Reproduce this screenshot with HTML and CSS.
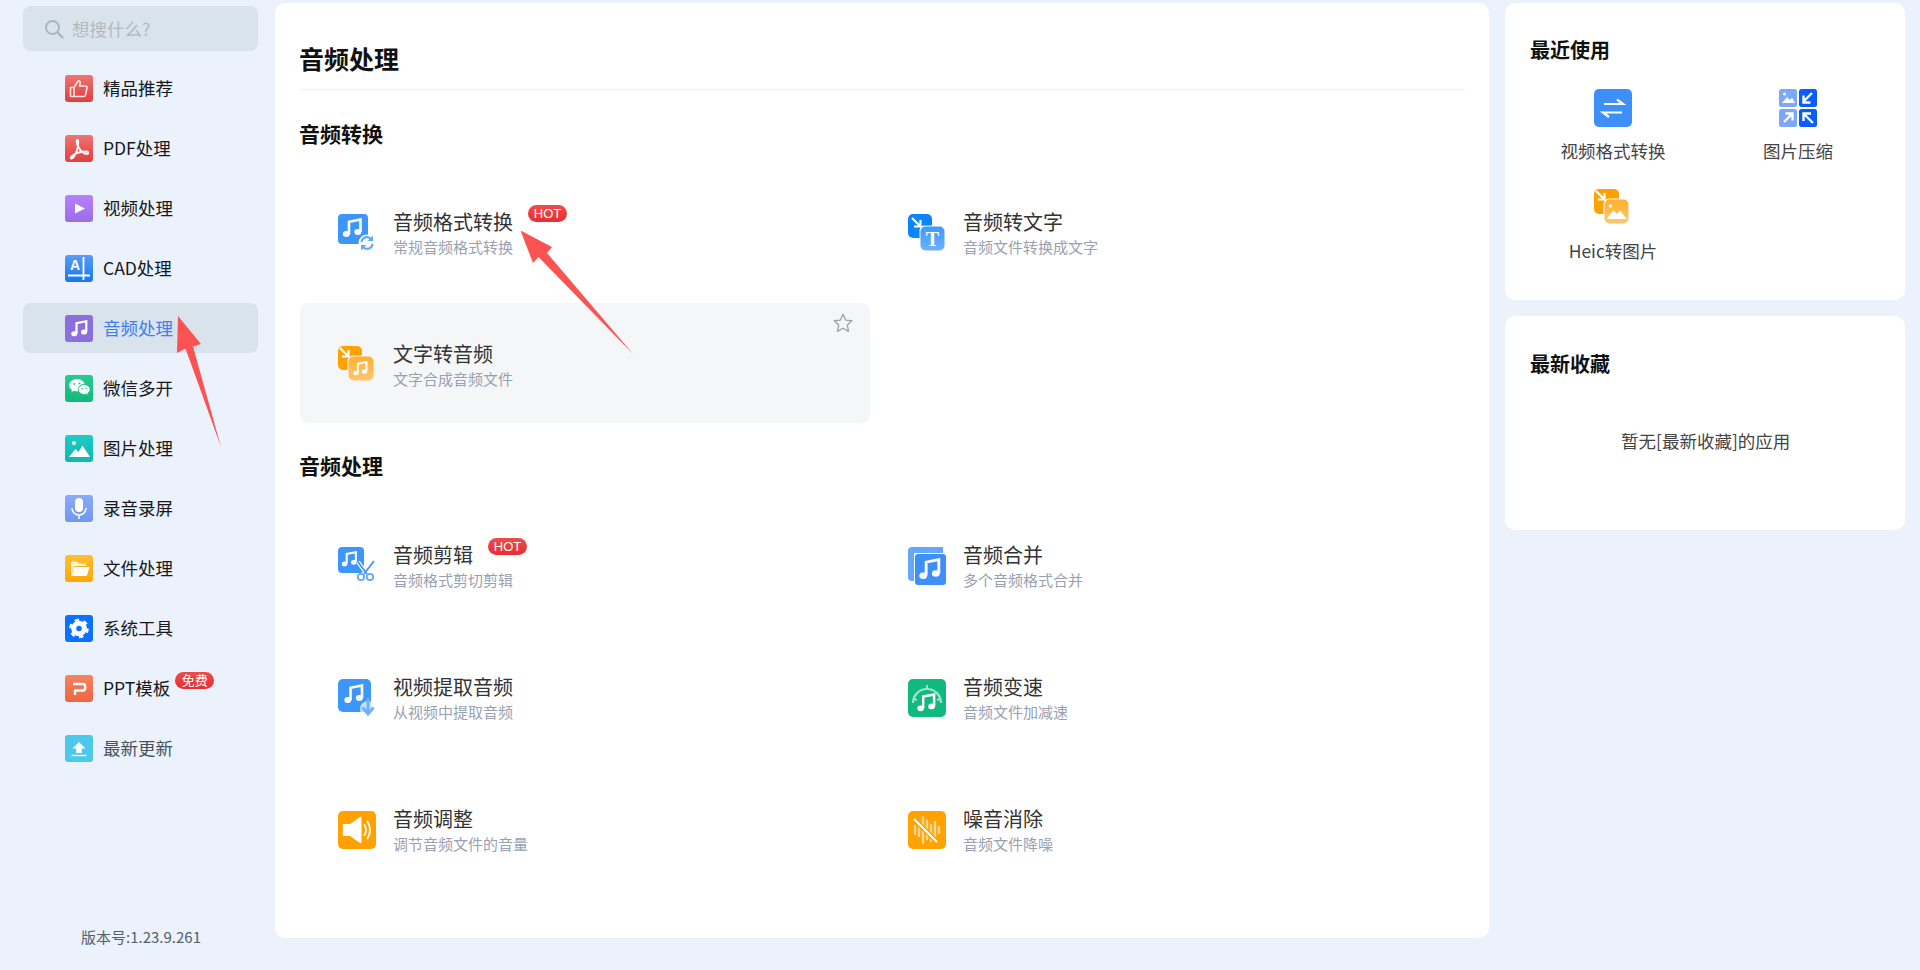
FILE: index.html
```html
<!DOCTYPE html>
<html lang="zh-CN">
<head>
<meta charset="utf-8">
<title>音频处理</title>
<link rel="stylesheet" href="styles.css">
</head>
<body>
<svg class="defs" width="0" height="0" aria-hidden="true">
  <defs>
    <symbol id="note" viewBox="2 2.500 20 20">
      <path d="M8.500 18.500V6.200L20 4v12.500" fill="none" stroke="currentColor" stroke-width="2.600"/>
      <ellipse cx="5.800" cy="18.600" rx="3.500" ry="3" fill="currentColor"/>
      <ellipse cx="17.300" cy="16.600" rx="3.500" ry="3" fill="currentColor"/>
    </symbol>
    <linearGradient id="gRed" x1="0" y1="0" x2="0" y2="1"><stop offset="0" stop-color="#ee7472"/><stop offset="1" stop-color="#e23f3d"/></linearGradient>
    <linearGradient id="gPur" x1="0" y1="0" x2="0" y2="1"><stop offset="0" stop-color="#b880fb"/><stop offset="1" stop-color="#9a6ce6"/></linearGradient>
    <linearGradient id="gCad" x1="0" y1="0" x2="0" y2="1"><stop offset="0" stop-color="#5a9cf2"/><stop offset="1" stop-color="#1479f0"/></linearGradient>
    <linearGradient id="gGrn" x1="0" y1="0" x2="0" y2="1"><stop offset="0" stop-color="#27cb90"/><stop offset="1" stop-color="#12b97b"/></linearGradient>
    <linearGradient id="gTeal" x1="0" y1="0" x2="0" y2="1"><stop offset="0" stop-color="#1ecbc8"/><stop offset="1" stop-color="#10b8ad"/></linearGradient>
    <linearGradient id="gMic" x1="0" y1="0" x2="0" y2="1"><stop offset="0" stop-color="#8aaafa"/><stop offset="1" stop-color="#7197ef"/></linearGradient>
    <linearGradient id="gYel" x1="0" y1="0" x2="0" y2="1"><stop offset="0" stop-color="#ffbe33"/><stop offset="1" stop-color="#ffa800"/></linearGradient>
    <linearGradient id="gPpt" x1="0" y1="0" x2="0" y2="1"><stop offset="0" stop-color="#f5845f"/><stop offset="1" stop-color="#ed6540"/></linearGradient>
    <linearGradient id="gLightO" x1="0" y1="0" x2="0" y2="1"><stop offset="0" stop-color="#ffb02e"/><stop offset="1" stop-color="#ffc76e"/></linearGradient>
    <linearGradient id="gLightB" x1="0" y1="0" x2="0" y2="1"><stop offset="0" stop-color="#3e98fd"/><stop offset="1" stop-color="#6db2ff"/></linearGradient>
  </defs>
</svg>

<aside class="sidebar">
  <div class="search">
    <svg class="search-icon" viewBox="0 0 20 20"><circle cx="8.500" cy="8.500" r="6.500" fill="none" stroke="#a9b5c4" stroke-width="2"/><path d="M13.500 13.500l5 5" stroke="#a9b5c4" stroke-width="2.400" stroke-linecap="round"/></svg>
    <span>想搜什么?</span>
  </div>
  <nav class="nav">
    <a class="nav-item">
      <svg class="nav-icon" viewBox="0 0 28 27"><rect width="28" height="27" rx="3" fill="url(#gRed)"/><path d="M5.500 12.500h3.500v9H5.500zM9 12.500l4-6.500c1.500-.5 2.500.6 2.200 2l-.7 3h6c1.200 0 1.800 1 1.500 2l-1.500 7c-.2.800-.8 1.500-1.700 1.500H9" fill="none" stroke="#fff" stroke-opacity=".85" stroke-width="1.600" stroke-linejoin="round"/></svg>
      <span>精品推荐</span>
    </a>
    <a class="nav-item">
      <svg class="nav-icon" viewBox="0 0 28 27"><rect width="28" height="27" rx="3" fill="url(#gRed)"/><path d="M12.500 5c-1.500 0-1 4 1.500 8 2 3.500 5 6 8 6 2 0 1.500-2.500-.5-2.500-3.500 0-9 1-12.500 3-2.500 1.500-4 3.500-3 4 1.500.5 4-3 5.500-7 1.500-4 2.500-11.500 1-11.500z" fill="none" stroke="#fff" stroke-width="1.800"/></svg>
      <span>PDF处理</span>
    </a>
    <a class="nav-item">
      <svg class="nav-icon" viewBox="0 0 28 27"><rect width="28" height="27" rx="3" fill="url(#gPur)"/><path d="M10 8.500l10 5-10 5z" fill="#fff"/></svg>
      <span>视频处理</span>
    </a>
    <a class="nav-item">
      <svg class="nav-icon" viewBox="0 0 28 27"><rect width="28" height="27" rx="3" fill="url(#gCad)"/><text x="5" y="15" class="icon-letter">A</text><path d="M3 20.500h22M18.500 2v23" stroke="#fff" stroke-width="1.800"/></svg>
      <span>CAD处理</span>
    </a>
    <a class="nav-item is-active">
      <svg class="nav-icon" viewBox="0 0 28 27"><rect width="28" height="27" rx="3" fill="#8b6fdc"/><use href="#note" x="6" y="5" width="17" height="17" class="white"/></svg>
      <span>音频处理</span>
    </a>
    <a class="nav-item">
      <svg class="nav-icon" viewBox="0 0 28 27"><rect width="28" height="27" rx="3" fill="url(#gGrn)"/><path d="M12 4c-4 0-8 2.500-8 6.300 0 2 1 3.500 2.700 4.700L6 17.500l2.800-1.400c1 .3 2 .4 3.200.4 .5 0 1 0 1.400-.1-.2-.6-.3-1.200-.3-1.800 0-3.300 3-5.600 6.900-5.600C19 6 15.800 4 12 4z" fill="#fff" stroke="#2cc48f" stroke-width=".5"/><path d="M25 14.500c0-2.800-2.700-4.800-5.800-4.800s-5.800 2-5.800 4.800 2.700 4.800 5.800 4.800c.7 0 1.300-.1 2-.3l2 1.200-.5-2c1.400-.9 2.300-2.200 2.300-3.700z" fill="#fff" stroke="#1cbb83" stroke-width=".6"/><circle cx="9.500" cy="9" r="1" fill="#1fbf86"/><circle cx="14.500" cy="8.500" r="1" fill="#1fbf86"/><circle cx="17.300" cy="13.800" r=".8" fill="#1fbf86"/><circle cx="21.200" cy="13.800" r=".8" fill="#1fbf86"/></svg>
      <span>微信多开</span>
    </a>
    <a class="nav-item">
      <svg class="nav-icon" viewBox="0 0 28 27"><rect width="28" height="27" rx="3" fill="url(#gTeal)"/><circle cx="9" cy="8" r="2" fill="#fff"/><path d="M4 22l6.500-8 3 3 4-6.500L25 22z" fill="#fff"/></svg>
      <span>图片处理</span>
    </a>
    <a class="nav-item">
      <svg class="nav-icon" viewBox="0 0 28 27"><rect width="28" height="27" rx="3" fill="url(#gMic)"/><rect x="10" y="3" width="8" height="14" rx="4" fill="#fff"/><path d="M7 13c0 4 3 7 7 7s7-3 7-7M14 20v4" fill="none" stroke="#fff" stroke-width="1.500"/></svg>
      <span>录音录屏</span>
    </a>
    <a class="nav-item">
      <svg class="nav-icon" viewBox="0 0 28 27"><rect width="28" height="27" rx="3" fill="url(#gYel)"/><path d="M6 20V7.500C6 7 6.500 6.500 7 6.500h5l2 2h7v2.500H10c-.8 0-1.400.5-1.600 1.200z" fill="#fff" fill-opacity=".85"/><path d="M6 21l3-9h15.500l-2.500 8.300c-.2.5-.6.700-1 .7z" fill="#fff"/></svg>
      <span>文件处理</span>
    </a>
    <a class="nav-item">
      <svg class="nav-icon" viewBox="0 0 28 27"><rect width="28" height="27" rx="3" fill="#0a72ff"/><circle cx="14" cy="13.500" r="5.300" fill="none" stroke="#fff" stroke-width="5"/><circle cx="14" cy="13.500" r="8.500" fill="none" stroke="#fff" stroke-width="2.600" stroke-dasharray="4.300 4.600"/></svg>
      <span>系统工具</span>
    </a>
    <a class="nav-item">
      <svg class="nav-icon" viewBox="0 0 28 27"><rect width="28" height="27" rx="3" fill="url(#gPpt)"/><path d="M8 9h10c3 0 3 6.500 0 6.500h-8V20" fill="none" stroke="#fff" stroke-width="2.400" stroke-linejoin="round"/></svg>
      <span class="nav-label">PPT模板<em class="pill pill-nav">免费</em></span>
    </a>
    <a class="nav-item is-muted">
      <svg class="nav-icon" viewBox="0 0 28 27"><rect width="28" height="27" rx="3" fill="#4cc9ea"/><path d="M14 7l6.500 6.500h-3.700v4.500h-5.600v-4.500H7.500z" fill="#fff"/><path d="M6.500 20.500h15" stroke="#fff" stroke-width="1.400"/></svg>
      <span>最新更新</span>
    </a>
  </nav>
  <div class="version">版本号:1.23.9.261</div>
</aside>

<main class="main">
  <h1 class="page-title">音频处理</h1>

  <h2 class="section-title">音频转换</h2>
  <div class="tool-grid">
    <a class="tool">
      <svg class="tool-icon" viewBox="0 0 38 38"><rect width="30" height="30" rx="4" fill="#3d96fb"/><use href="#note" x="4.500" y="4" width="20" height="20" class="white"/><circle cx="29" cy="29" r="8.500" fill="#fff"/><path d="M23.500 28c.6-3.200 3-4.800 5.500-4.800 1.700 0 2.900.6 3.800 1.600M34.500 30c-.6 3.200-3 4.800-5.500 4.800-1.700 0-2.900-.6-3.800-1.600" fill="none" stroke="#63aafa" stroke-width="2.200"/><path d="M35 21.500v5.500h-5.500zM23 36.500V31h5.500z" fill="#63aafa"/></svg>
      <div class="tool-text"><div class="tool-name">音频格式转换<em class="pill pill-tool">HOT</em></div><div class="tool-desc">常规音频格式转换</div></div>
    </a>
    <a class="tool">
      <svg class="tool-icon" viewBox="0 0 38 38"><rect width="24" height="24" rx="5" fill="#0a84ff"/><path d="M4 4l8 8M12.500 6v6.500H6" fill="none" stroke="#fff" stroke-width="2.200"/><rect x="11.500" y="11.500" width="25" height="25" rx="5" fill="#fff"/><rect x="12.500" y="12.500" width="24" height="24" rx="5" fill="url(#gLightB)"/><text x="24.500" y="31.500" class="icon-serif">T</text></svg>
      <div class="tool-text"><div class="tool-name">音频转文字</div><div class="tool-desc">音频文件转换成文字</div></div>
    </a>
    <a class="tool is-hover">
      <svg class="tool-icon" viewBox="0 0 38 38"><rect width="24" height="24" rx="5" fill="#ffa200"/><path d="M2 2l8 8M10.500 4v6.500H4" fill="none" stroke="#fff" stroke-width="2.200"/><rect x="9.500" y="9.500" width="27" height="27" rx="5.500" fill="#f5f6f8"/><rect x="10.500" y="10.500" width="25" height="24" rx="5" fill="url(#gLightO)"/><use href="#note" x="15" y="15" width="15" height="15" class="white"/></svg>
      <div class="tool-text"><div class="tool-name">文字转音频</div><div class="tool-desc">文字合成音频文件</div></div>
      <svg class="star" viewBox="0 0 24 24"><path d="M12 2.500l2.900 6.300 6.800.8-5 4.700 1.300 6.800-6-3.400-6 3.400 1.300-6.800-5-4.700 6.800-.8z" fill="none" stroke="#9aa3b2" stroke-width="1.500" stroke-linejoin="round"/></svg>
    </a>
  </div>

  <h2 class="section-title section-second">音频处理</h2>
  <div class="tool-grid">
    <a class="tool">
      <svg class="tool-icon" viewBox="0 0 38 38"><rect width="26" height="26" rx="4" fill="#3d96fb"/><use href="#note" x="3.500" y="4" width="16" height="16" class="white"/><path d="M20 15l9 12M36 14l-10 13" stroke="#fff" stroke-width="4"/><path d="M20 15l9 12M36 14l-10 13" stroke="#3d96fb" stroke-width="1.800"/><circle cx="23" cy="30" r="3.200" fill="#fff" stroke="#63aafa" stroke-width="1.800"/><circle cx="32" cy="30" r="3.200" fill="#fff" stroke="#63aafa" stroke-width="1.800"/></svg>
      <div class="tool-text"><div class="tool-name">音频剪辑<em class="pill pill-tool">HOT</em></div><div class="tool-desc">音频格式剪切剪辑</div></div>
    </a>
    <a class="tool">
      <svg class="tool-icon" viewBox="0 0 38 38"><path d="M4 0h31v6H7c-.8 0-1 .3-1 1v27H4c-2.500 0-4-1.500-4-4V4c0-2.500 1.500-4 4-4z" fill="#64a8fc"/><rect x="7" y="7" width="31" height="31" rx="3" fill="#3d8ffa"/><use href="#note" x="11" y="11" width="22" height="22" class="white"/></svg>
      <div class="tool-text"><div class="tool-name">音频合并</div><div class="tool-desc">多个音频格式合并</div></div>
    </a>
    <a class="tool">
      <svg class="tool-icon" viewBox="0 0 38 38"><rect width="33" height="33" rx="5" fill="#3d96fb"/><use href="#note" x="6" y="5" width="20" height="20" class="white"/><circle cx="30" cy="30" r="8" fill="#fff" fill-opacity=".7"/><path d="M30 19v14M24.500 28.500L30 35l5.500-6.500" fill="none" stroke="#6fb0fa" stroke-width="3"/></svg>
      <div class="tool-text"><div class="tool-name">视频提取音频</div><div class="tool-desc">从视频中提取音频</div></div>
    </a>
    <a class="tool">
      <svg class="tool-icon" viewBox="0 0 38 38"><rect width="38" height="38" rx="5" fill="#10b97c"/><path d="M5 24a14 14 0 0 1 28 0" fill="none" stroke="#9fe3c9" stroke-width="2.200"/><path d="M19 6v4M6 20l3 1M32 20l-3 1" stroke="#9fe3c9" stroke-width="2"/><use href="#note" x="9" y="14" width="19" height="19" class="white"/></svg>
      <div class="tool-text"><div class="tool-name">音频变速</div><div class="tool-desc">音频文件加减速</div></div>
    </a>
    <a class="tool">
      <svg class="tool-icon" viewBox="0 0 38 38"><rect width="38" height="38" rx="5" fill="#ffa200"/><path d="M6 13h6l10-7c.7-.4 1.500 0 1.500 1v24c0 1-.8 1.400-1.500 1l-10-7H6c-.8 0-1.200-.5-1.200-1.200V14.200c0-.7.4-1.200 1.200-1.200z" fill="#fff"/><path d="M26.500 14c1.800 3 1.800 7 0 10M29.500 10.500c3.300 5 3.300 12 0 17" fill="none" stroke="#fff" stroke-width="1.800" stroke-linecap="round"/></svg>
      <div class="tool-text"><div class="tool-name">音频调整</div><div class="tool-desc">调节音频文件的音量</div></div>
    </a>
    <a class="tool">
      <svg class="tool-icon" viewBox="0 0 38 38"><rect width="38" height="38" rx="5" fill="#ffa200"/><path d="M7 15v8M11 13v12M15 6v26M19 10v18M23 14v16M27 11v15M31 16v6" stroke="#ffd893" stroke-width="2.400" stroke-linecap="round"/><path d="M6 8l23 23" stroke="#ffa200" stroke-width="5"/><path d="M6 8l23 23" stroke="#fff" stroke-width="2.200"/></svg>
      <div class="tool-text"><div class="tool-name">噪音消除</div><div class="tool-desc">音频文件降噪</div></div>
    </a>
  </div>
</main>

<aside class="rail">
  <section class="panel panel-recent">
    <h3 class="panel-title">最近使用</h3>
    <div class="recent-grid">
      <a class="recent">
        <svg class="recent-icon" viewBox="0 0 38 38"><rect width="38" height="38" rx="5" fill="#3d8ffa"/><path d="M10 15h19l-6-4.500M28 23.500H9l6 4.500" fill="none" stroke="#fff" stroke-width="2.200"/></svg>
        <span>视频格式转换</span>
      </a>
      <a class="recent">
        <svg class="recent-icon" viewBox="0 0 38 38"><rect width="18" height="18" rx="2.500" fill="#7ba7fd"/><rect x="20" width="18" height="18" rx="2.500" fill="#0a5cff"/><rect y="20" width="18" height="18" rx="2.500" fill="#7ba7fd"/><rect x="20" y="20" width="18" height="18" rx="2.500" fill="#0a5cff"/><circle cx="5.500" cy="5" r="1.500" fill="#fff"/><path d="M3 14l5-6 3 3 2-2.500 3 5.500z" fill="#fff"/><path d="M33 4l-9 9M24.500 6.500v7h7" fill="none" stroke="#fff" stroke-width="2.400"/><path d="M5 33l9-9M6.500 24.500h7v7" fill="none" stroke="#fff" stroke-width="2.400"/><path d="M34 34l-9-9M24.500 32v-7.500H32" fill="none" stroke="#fff" stroke-width="2.400"/></svg>
        <span>图片压缩</span>
      </a>
      <a class="recent">
        <svg class="recent-icon" viewBox="0 0 38 38"><rect width="25" height="25" rx="5" fill="#ffa200"/><path d="M2 2l8 8M10.500 4v6.500H4" fill="none" stroke="#fff" stroke-width="2.200"/><rect x="9.500" y="9.500" width="26" height="26" rx="5.500" fill="#fff"/><rect x="10.500" y="10.500" width="24" height="24" rx="5" fill="url(#gLightO)"/><circle cx="16.500" cy="17" r="1.800" fill="#fff"/><path d="M12.500 30l7-8.500 3.500 3.500 3-3.500 7 8.500z" fill="#fff"/></svg>
        <span>Heic转图片</span>
      </a>
    </div>
  </section>
  <section class="panel panel-fav">
    <h3 class="panel-title">最新收藏</h3>
    <p class="empty">暂无[最新收藏]的应用</p>
  </section>
</aside>

<svg class="annotations" viewBox="0 0 1920 970" aria-hidden="true">
  <path d="M178 316L201 344 193 346.500 221 447 185.500 348.500 177 353z" fill="#fb5252"/>
  <path d="M520.500 230.500L552 247 547 253 633.500 354.500 538.500 257 533 263z" fill="#fb5252"/>
</svg>
</body>
</html>
```

FILE: styles.css
```css
* { box-sizing: border-box; }
html, body { margin: 0; height: 100%; }
body {
  height: 970px;
  overflow: hidden;
  display: flex;
  gap: 16px;
  padding: 3px 15px 32px 0;
  background: #ebf2fb;
  font-family: "Noto Sans CJK SC", "Noto Sans", sans-serif;
  color: #333;
  position: relative;
}
a { color: inherit; text-decoration: none; }
em { font-style: normal; }
h1, h2, h3, p { margin: 0; }
.defs { position: absolute; }
.white { color: #fff; }
.icon-letter { font: 700 14px "Liberation Sans", sans-serif; fill: #fff; }
.icon-serif { font: 700 20px "Liberation Serif", serif; fill: #fff; text-anchor: middle; }

.sidebar {
  width: 259px;
  flex: none;
  display: flex;
  flex-direction: column;
  padding: 3px 0 0 23px;
  height: 965px;
}
.search {
  height: 45px;
  width: 235px;
  border-radius: 8px;
  background: #d9e3ec;
  display: flex;
  align-items: center;
  gap: 8px;
  padding-left: 21px;
  color: #b3b9c1;
  font-size: 17.500px;
  flex: none;
}
.search-icon { width: 20px; height: 20px; }
.nav {
  display: flex;
  flex-direction: column;
  gap: 10px;
  margin-top: 12px;
}
.nav-item {
  height: 50px;
  width: 235px;
  border-radius: 8px;
  display: flex;
  align-items: center;
  gap: 10px;
  padding-left: 42px;
  font-size: 17.500px;
  color: #16181c;
}
.nav-item span { margin-bottom: 2px; }
.nav-icon { width: 28px; height: 27px; flex: none; }
.nav-item.is-active { background: #d9e3ec; color: #3f7fee; }
.nav-item.is-muted { color: #47525f; }
.nav-label { position: relative; }
.version {
  margin-top: auto;
  text-align: center;
  font-size: 15px;
  line-height: 22px;
  color: #55606d;
  padding-bottom: 20px;
  width: 236px;
}

.pill {
  position: absolute;
  left: 100%;
  height: 17px;
  width: 39px;
  border-radius: 9px;
  background: linear-gradient(#f04b4b, #e62f2f);
  color: #fff;
  font-size: 13px;
  line-height: 17px;
  text-align: center;
  font-family: "Liberation Sans", "Noto Sans CJK SC", sans-serif;
}
.pill-nav { top: -3px; margin-left: 5px; }
.pill-tool { top: -4px; margin-left: 15px; }

.main {
  width: 1214px;
  height: 935px;
  flex: none;
  background: #fff;
  border-radius: 10px;
  padding: 40px 25px 0;
}
.page-title {
  font-size: 25px;
  line-height: 30px;
  height: 47px;
  font-weight: 700;
  color: #111;
  border-bottom: 1px solid #eef1f5;
  width: 1165px;
  text-indent: -1px;
}
.section-title {
  font-size: 21px;
  line-height: 30px;
  font-weight: 700;
  color: #111;
  margin-top: 28px;
  margin-bottom: 23px;
  text-indent: -1px;
}
.section-second { margin-top: 27px; margin-bottom: 24px; }
.tool-grid {
  display: grid;
  grid-template-columns: 570px 570px;
  grid-auto-rows: 120px;
  row-gap: 12px;
}
.tool {
  position: relative;
  display: flex;
  align-items: flex-start;
  gap: 17px;
  padding: 38px 0 0 38px;
  border-radius: 8px;
}
.tool.is-hover { background: #f5f6f8; }
.tool-icon { width: 38px; height: 38px; margin-top: 5px; flex: none; }
.tool-name {
  position: relative;
  width: max-content;
  font-size: 20px;
  line-height: 26px;
  color: #333;
}
.tool-desc {
  font-size: 15px;
  line-height: 24px;
  color: #98a1b0;
}
.star {
  position: absolute;
  right: 16px;
  top: 9px;
  width: 22px;
  height: 22px;
}

.rail {
  width: 400px;
  flex: none;
  display: flex;
  flex-direction: column;
  gap: 16px;
}
.panel {
  background: #fff;
  border-radius: 10px;
}
.panel-recent { height: 297px; padding: 35px 0 0 15.500px; }
.panel-fav { height: 214px; padding: 36px 0 0 25px; }
.panel-title {
  font-size: 20px;
  line-height: 24px;
  font-weight: 700;
  color: #111;
}
.panel-recent .panel-title { padding-left: 9.500px; }
.recent-grid {
  display: grid;
  grid-template-columns: 185px 185px;
  grid-auto-rows: 100px;
  margin-top: 27px;
}
.recent {
  display: flex;
  flex-direction: column;
  align-items: center;
  font-size: 17.500px;
  line-height: 24px;
  color: #444;
}
.recent-icon { width: 38px; height: 38px; margin-bottom: 12px; flex: none; }
.empty {
  margin-top: 53px;
  font-size: 17.500px;
  line-height: 24px;
  color: #444;
  padding-left: 91px;
}

.annotations {
  position: absolute;
  left: 0;
  top: 0;
  width: 1920px;
  height: 970px;
  pointer-events: none;
}
```
